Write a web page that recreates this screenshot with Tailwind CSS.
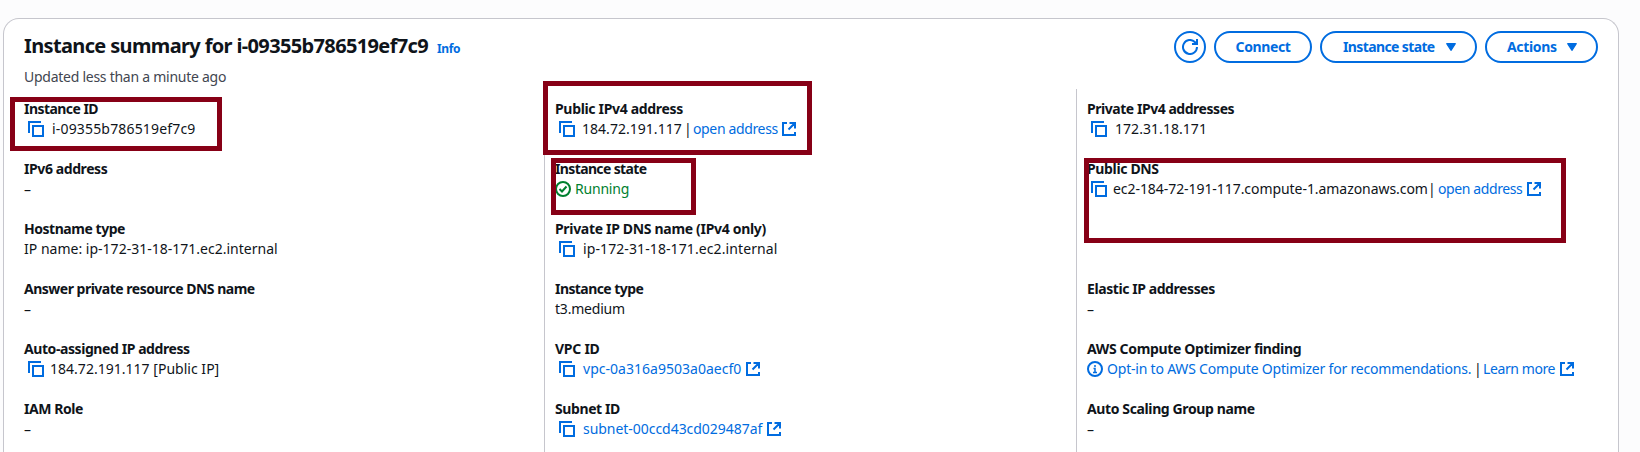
<!DOCTYPE html>
<html lang="en">
<head>
<meta charset="utf-8">
<title>Instance summary</title>
<script src="https://cdn.jsdelivr.net/npm/@tailwindcss/browser@4"></script>
</head>
<body class="relative h-[452px] overflow-hidden bg-[#fcfcfd] pt-[18px] pl-[3px] font-['Noto_Sans',sans-serif] text-sm leading-5 whitespace-nowrap text-[#0f141a]">
<svg class="hidden">
  <symbol id="copy" viewBox="0 0 16 16"><path d="M1 12V1H13M5 5H15V15H5Z" fill="none" stroke="currentColor" stroke-width="2"/></symbol>
  <symbol id="ext" viewBox="0 0 14 14"><path d="M5 1H1V13H13V10M7.5 1H13V6.500M6.500 7.500L12.500 1.500" fill="none" stroke="currentColor" stroke-width="2"/></symbol>
  <symbol id="caret" viewBox="0 0 10 8"><path d="M.7 .7H9.300L5 7.300Z" fill="currentColor" stroke="currentColor" stroke-width="1.2" stroke-linejoin="round"/></symbol>
</svg>
<main class="flex h-[434px] w-[1616px] flex-col rounded-t-2xl border border-b-0 border-[#c6c6cd] bg-white">
  <header class="flex h-[70px] items-start justify-between px-5 pt-3">
    <div>
      <div class="mt-[3px] flex h-6 items-center">
        <h2 class="text-xl leading-6 font-bold tracking-[-0.64px]">Instance summary for i-09355b786519ef7c9</h2>
        <a class="ml-[9px] pt-[5px] text-xs leading-5 font-bold tracking-[-0.4px] text-[#006ce0]">Info</a>
      </div>
      <p class="mt-[9px] tracking-[-0.26px] text-[#424650]">Updated less than a minute ago</p>
    </div>
    <div class="flex gap-2 font-bold text-[#006ce0]">
      <button class="flex size-8 items-center justify-center rounded-full border-2 border-[#006ce0]"><svg class="size-4" viewBox="0 0 16 16" fill="none" stroke="currentColor" stroke-width="2"><path d="M15 8A7 7 0 1 1 12.800 2.900L15 5"/><path d="M15 0V5H10"/></svg></button>
      <button class="flex h-8 w-[98px] items-center justify-center rounded-full border-2 border-[#006ce0] tracking-[-0.4px]">Connect</button>
      <button class="flex h-8 w-[157px] items-center justify-between rounded-full border-2 border-[#006ce0] pr-[19px] pl-[21px] tracking-[-0.62px]">Instance state<svg class="h-2 w-2.5"><use href="#caret"/></svg></button>
      <button class="flex h-8 w-[113px] items-center justify-between rounded-full border-2 border-[#006ce0] pr-[19px] pl-5 tracking-[-0.33px]">Actions<svg class="h-2 w-2.5"><use href="#caret"/></svg></button>
    </div>
  </header>
  <div class="grid min-h-0 flex-1 grid-cols-[540px_532px_1fr]">
    <dl class="flex flex-col gap-5 pt-[10px] pl-5">
      <div class="h-10"><dt class="font-bold tracking-[-0.55px]">Instance ID</dt><dd class="flex h-5 items-center"><svg class="ml-1 size-4 text-[#006ce0]"><use href="#copy"/></svg><span class="ml-2 tracking-[0.17px]">i-09355b786519ef7c9</span></dd></div>
      <div class="h-10"><dt class="font-bold tracking-[-0.41px]">IPv6 address</dt><dd class="pt-px">–</dd></div>
      <div class="h-10"><dt class="font-bold tracking-[-0.46px]">Hostname type</dt><dd class="tracking-[0.01px]">IP name: ip-172-31-18-171.ec2.internal</dd></div>
      <div class="h-10"><dt class="font-bold tracking-[-0.5px]">Answer private resource DNS name</dt><dd class="pt-px">–</dd></div>
      <div class="h-10"><dt class="font-bold tracking-[-0.42px]">Auto-assigned IP address</dt><dd class="flex h-5 items-center"><svg class="ml-1 size-4 text-[#006ce0]"><use href="#copy"/></svg><span class="ml-1.5 tracking-[0.02px]">184.72.191.117 [Public IP]</span></dd></div>
      <div class="h-10"><dt class="font-bold tracking-[-0.43px]">IAM Role</dt><dd class="pt-px">–</dd></div>
    </dl>
    <dl class="flex flex-col gap-5 border-l border-[#c6c6cd] pt-[10px] pl-[10px]">
      <div class="h-10"><dt class="font-bold tracking-[-0.33px]">Public IPv4 address</dt><dd class="flex h-5 items-center"><svg class="ml-1 size-4 text-[#006ce0]"><use href="#copy"/></svg><span class="ml-[7px] w-[102px] tracking-[0.03px]">184.72.191.117</span><span class="w-[9px]">|</span><a class="w-[89px] tracking-[-0.36px] text-[#006ce0]">open address</a><svg class="size-3.5 text-[#006ce0]"><use href="#ext"/></svg></dd></div>
      <div class="h-10"><dt class="font-bold tracking-[-0.63px]">Instance state</dt><dd class="flex h-5 items-center text-[#00802f]"><svg class="size-4" viewBox="0 0 16 16" fill="none" stroke="currentColor" stroke-width="2"><circle cx="8" cy="8" r="7"/><path d="M4.500 8L7 10.500L11.500 5.500"/></svg><span class="ml-1 tracking-[-0.2px]">Running</span></dd></div>
      <div class="h-10"><dt class="font-bold tracking-[-0.32px]">Private IP DNS name (IPv4 only)</dt><dd class="flex h-5 items-center"><svg class="ml-1 size-4 text-[#006ce0]"><use href="#copy"/></svg><span class="ml-2 tracking-[0.1px]">ip-172-31-18-171.ec2.internal</span></dd></div>
      <div class="h-10"><dt class="font-bold tracking-[-0.57px]">Instance type</dt><dd class="tracking-[-0.2px]">t3.medium</dd></div>
      <div class="h-10"><dt class="font-bold tracking-[-0.25px]">VPC ID</dt><dd class="flex h-5 items-center text-[#006ce0]"><svg class="ml-1 size-4"><use href="#copy"/></svg><a class="ml-2 w-[163px] tracking-[0.02px]">vpc-0a316a9503a0aecf0</a><svg class="size-3.5"><use href="#ext"/></svg></dd></div>
      <div class="h-10"><dt class="font-bold tracking-[-0.4px]">Subnet ID</dt><dd class="flex h-5 items-center text-[#006ce0]"><svg class="ml-1 size-4"><use href="#copy"/></svg><a class="ml-2 w-[184px] tracking-[-0.04px]">subnet-00ccd43cd029487af</a><svg class="size-3.5"><use href="#ext"/></svg></dd></div>
    </dl>
    <dl class="flex flex-col gap-5 border-l border-[#c6c6cd] pt-[10px] pl-[10px]">
      <div class="h-10"><dt class="font-bold tracking-[-0.46px]">Private IPv4 addresses</dt><dd class="flex h-5 items-center"><svg class="ml-1 size-4 text-[#006ce0]"><use href="#copy"/></svg><span class="ml-2 tracking-[0.05px]">172.31.18.171</span></dd></div>
      <div class="h-[100px]"><dt class="font-bold tracking-[-0.35px]">Public DNS</dt><dd class="flex h-5 items-center"><svg class="ml-1 size-4 text-[#006ce0]"><use href="#copy"/></svg><span class="ml-1.5 w-[315px] tracking-[-0.06px]">ec2-184-72-191-117.compute-1.amazonaws.com</span><span class="w-2.5">|</span><a class="w-[89px] tracking-[-0.4px] text-[#006ce0]">open address</a><svg class="size-3.5 text-[#006ce0]"><use href="#ext"/></svg></dd></div>
      <div class="h-10"><dt class="font-bold tracking-[-0.42px]">Elastic IP addresses</dt><dd class="pt-px">–</dd></div>
      <div class="h-10"><dt class="font-bold tracking-[-0.35px]">AWS Compute Optimizer finding</dt><dd class="flex h-5 items-center text-[#006ce0]"><svg class="size-4" viewBox="0 0 16 16" fill="none" stroke="currentColor" stroke-width="2"><circle cx="8" cy="8" r="7"/><path d="M8 4V6M6.500 7.500H8V11M6 11.500H10" stroke-width="1.500"/></svg><a class="ml-1 w-[367px] tracking-[-0.2px]">Opt-in to AWS Compute Optimizer for recommendations.</a><span class="w-[9px] text-[#0f141a]">|</span><a class="w-[77px] tracking-[-0.4px]">Learn more</a><svg class="size-3.5"><use href="#ext"/></svg></dd></div>
      <div class="h-10"><dt class="font-bold tracking-[-0.38px]">Auto Scaling Group name</dt><dd class="pt-px">–</dd></div>
    </dl>
  </div>
</main>
<div class="absolute top-[97px] left-[10px] h-[54px] w-[212px] border-5 border-[#870016]"></div>
<div class="absolute top-[81px] left-[543px] h-[74px] w-[269px] border-5 border-[#870016]"></div>
<div class="absolute top-[158px] left-[551px] h-[57px] w-[145px] border-5 border-[#870016]"></div>
<div class="absolute top-[158px] left-[1084px] h-[85px] w-[482px] border-5 border-[#870016]"></div>
</body>
</html>
